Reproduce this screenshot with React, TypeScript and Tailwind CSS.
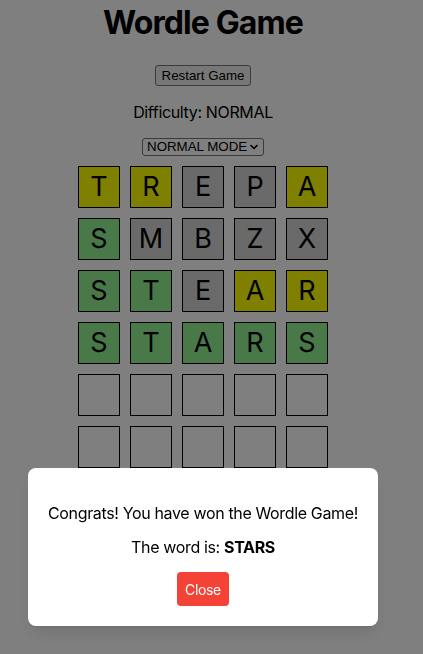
const rows: [string, string][][] = [
  [["T", "y"], ["R", "y"], ["E", "g"], ["P", "g"], ["A", "y"]],
  [["S", "c"], ["M", "g"], ["B", "g"], ["Z", "g"], ["X", "g"]],
  [["S", "c"], ["T", "c"], ["E", "g"], ["A", "y"], ["R", "y"]],
  [["S", "c"], ["T", "c"], ["A", "c"], ["R", "c"], ["S", "c"]],
  [["", ""], ["", ""], ["", ""], ["", ""], ["", ""]],
  [["", ""], ["", ""], ["", ""], ["", ""], ["", ""]],
];

const tileBg: Record<string, string> = {
  y: "bg-[#ffff00]",
  c: "bg-[#92f292]",
  g: "bg-[#d4d4d4]",
  "": "bg-white",
};

export default function App() {
  return (
    <div className="relative min-h-[654px] bg-white font-['Inter','Noto_Sans',sans-serif] tracking-[-0.35px] text-black">
      <div className="flex w-[406px] flex-col items-center">
        <h1 className="mt-[3px] text-[32px] font-bold leading-[40px] tracking-[-0.9px]">Wordle Game</h1>

        <button className="mt-[22px] flex h-[21px] items-center rounded-[3px] border border-[#767676] bg-[#efefef] px-[6px] font-['Liberation_Sans',Arial,sans-serif] text-[13.33px] tracking-normal">
          Restart Game
        </button>

        <div className="mt-[14px] text-[16px] leading-[24px]">Difficulty: NORMAL</div>

        <div className="mt-[14px] flex h-[18px] w-[122px] items-center justify-between rounded-[3px] border border-[#767676] bg-white pl-[4px] pr-[5px] font-['Liberation_Sans',Arial,sans-serif] text-[13.33px] tracking-normal">
          <span>NORMAL MODE</span>
          <svg width="8" height="6" viewBox="0 0 8 6" fill="none">
            <path d="M1 1.5 L4 4.5 L7 1.5" stroke="black" strokeWidth="1.6" strokeLinecap="round" strokeLinejoin="round" />
          </svg>
        </div>

        <div className="mt-[10px] flex flex-col gap-[10px]">
          {rows.map((row, i) => (
            <div key={i} className="flex gap-[10px]">
              {row.map(([letter, state], j) => (
                <div
                  key={j}
                  className={`flex h-[42px] w-[42px] items-center justify-center border border-black text-[27px] tracking-normal ${tileBg[state]}`}
                >
                  {letter}
                </div>
              ))}
            </div>
          ))}
        </div>
      </div>

      {/* win modal */}
      <div className="fixed inset-0 bg-black/50">
        <div className="flex w-[406px] justify-center pt-[468px]">
          <div className="flex w-[350px] flex-col items-center rounded-lg bg-white px-5 pb-5 pt-[35px] text-center shadow-lg">
            <p className="whitespace-nowrap text-[16px] leading-[20px]">Congrats! You have won the Wordle Game!</p>
            <p className="mt-[14px] text-[16px] leading-[20px]">
              The word is: <strong className="font-bold">STARS</strong>
            </p>
            <button className="mt-[15px] h-[34px] rounded-[4px] bg-[#f44336] px-[8px] text-[14px] text-white">
              Close
            </button>
          </div>
        </div>
      </div>
    </div>
  );
}
